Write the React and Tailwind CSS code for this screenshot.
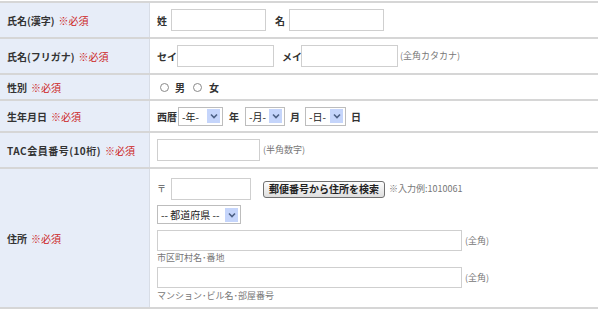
import React from 'react';

const FONT = { fontFamily: '"Noto Sans CJK JP", "Noto Sans", sans-serif' };

function Req() {
  return <span className="text-[#cc2222] font-normal ml-[4px]">※必須</span>;
}

function Label({ children }) {
  return (
    <div className="bg-[#e7edf8] border-r border-[#d8dde6] flex items-center pl-[7px] font-bold text-[10px] text-[#333] whitespace-nowrap">
      {children}
    </div>
  );
}

function Input({ w, h = 'h-[22px]' }) {
  return <div className={`${w} ${h} shrink-0 border border-[#cfcfcf] bg-white`} />;
}

function Select({ text, w }) {
  return (
    <div className={`${w} h-[19px] shrink-0 border border-[#bdbdbd] bg-white flex items-center justify-between pl-[3px] pr-[2px] text-[10px] font-normal text-[#222] whitespace-nowrap`}>
      <span>{text}</span>
      <span className="w-[13px] h-[14px] bg-[#c5d5fb] flex items-center justify-center">
        <svg width="8" height="6" viewBox="0 0 8 6">
          <path d="M1 1.5 L4 4.5 L7 1.5" stroke="#4d6185" strokeWidth="1.6" fill="none" />
        </svg>
      </span>
    </div>
  );
}

function Radio() {
  return <span className="w-[9px] h-[9px] rounded-full border border-[#8a8a8a] bg-white inline-block" />;
}

const row = 'grid grid-cols-[150px_1fr] border-b-2 border-[#d6d6d6]';
const note = 'text-[9px] text-[#777] whitespace-nowrap';
const cell = 'flex items-center pl-[7px] text-[10px] font-bold text-[#333] whitespace-nowrap';

export default function App() {
  return (
    <div className="w-[600px] h-[311px] bg-white overflow-hidden" style={FONT}>
      <div className="w-[598px] mt-[1px] border-t-2 border-[#d6d6d6]">
        <div className={`${row} h-[36px]`}>
          <Label>氏名(漢字)<Req /></Label>
          <div className={cell}>
            <span className="w-[14px]">姓</span>
            <Input w="w-[95px]" />
            <span className="ml-[9px] w-[14px]">名</span>
            <Input w="w-[95px]" />
          </div>
        </div>
        <div className={`${row} h-[36px]`}>
          <Label>氏名(フリガナ)<Req /></Label>
          <div className={cell}>
            <span className="w-[20px]">セイ</span>
            <Input w="w-[97px]" />
            <span className="ml-[8px] w-[19px]">メイ</span>
            <Input w="w-[97px]" />
            <span className={`${note} font-normal ml-[2px]`}>(全角カタカナ)</span>
          </div>
        </div>
        <div className={`${row} h-[26px]`}>
          <Label>性別<Req /></Label>
          <div className="flex items-center pl-[10px] text-[10px] font-bold text-[#333]">
            <Radio />
            <span className="ml-[6px]">男</span>
            <span className="ml-[8px] flex items-center"><Radio /></span>
            <span className="ml-[7px]">女</span>
          </div>
        </div>
        <div className={`${row} h-[32px]`}>
          <Label>生年月日<Req /></Label>
          <div className={cell}>
            <span className="mr-[1px]">西暦</span>
            <Select text="-年-" w="w-[45px]" />
            <span className="mx-[6px]">年</span>
            <Select text="-月-" w="w-[40px]" />
            <span className="mx-[5px]">月</span>
            <Select text="-日-" w="w-[41px]" />
            <span className="ml-[5px]">日</span>
          </div>
        </div>
        <div className={`${row} h-[36px]`}>
          <Label><span className="tracking-[0.5px]">TAC会員番号(10桁)</span><Req /></Label>
          <div className="flex items-center pl-[7px]">
            <Input w="w-[103px]" />
            <span className={`${note} ml-[3px]`}>(半角数字)</span>
          </div>
        </div>
        <div className={`${row} h-[140px]`}>
          <Label>住所<Req /></Label>
          <div className="flex flex-col pl-[7px] pt-[9px] text-[10px]">
            <div className="flex items-center">
              <span className="w-[14px] text-[#555] text-[9px]">〒</span>
              <Input w="w-[80px]" />
              <button className="ml-[12px] h-[17px] px-[5px] border border-[#707070] rounded-[3px] bg-gradient-to-b from-[#fdfdfd] to-[#dedede] font-bold text-[10px] text-[#222] leading-none whitespace-nowrap">
                郵便番号から住所を検索
              </button>
              <span className={`${note} ml-[4px]`}>※入力例:1010061</span>
            </div>
            <div className="mt-[5px]">
              <Select text="-- 都道府県 --" w="w-[84px]" />
            </div>
            <div className="flex items-center mt-[6px]">
              <Input w="w-[305px]" h="h-[21px]" />
              <span className={`${note} ml-[3px]`}>(全角)</span>
            </div>
            <div className={`${note} leading-[13px]`}>市区町村名･番地</div>
            <div className="flex items-center mt-[3px]">
              <Input w="w-[305px]" h="h-[21px]" />
              <span className={`${note} ml-[3px]`}>(全角)</span>
            </div>
            <div className={`${note} mt-[1px] leading-[13px]`}>マンション･ビル名･部屋番号</div>
          </div>
        </div>
      </div>
    </div>
  );
}
